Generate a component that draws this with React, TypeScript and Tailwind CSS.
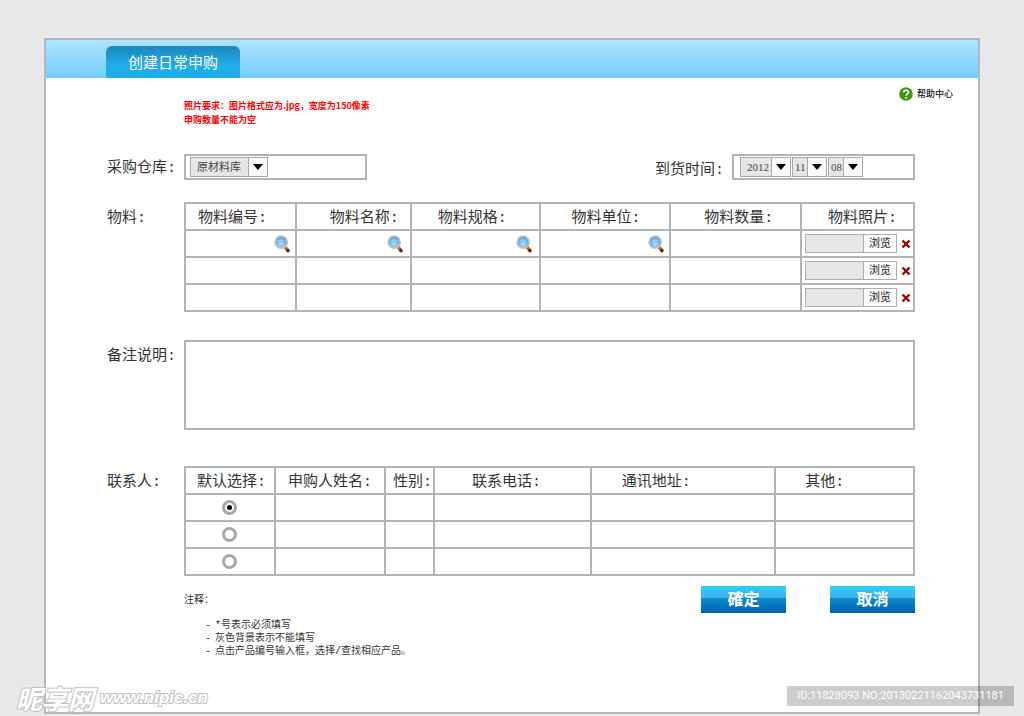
import React, { useState } from "react";

const LINE = "border-2 border-[#b0b5b6]";
const CJK = "font-['Liberation_Mono','Noto_Sans_CJK_SC',sans-serif]";
const HEAD = "p-0 pt-1 text-left leading-[21px] font-normal whitespace-nowrap";
const LABEL = "w-[77px] shrink-0 leading-[34px]";

const materialColumns = [
  { title: "物料编号", width: "w-[111px]", pad: "pl-[12px]", search: "pr-[5px]" },
  { title: "物料名称", width: "w-[115px]", pad: "pl-[33px]", search: "pr-[7px]" },
  { title: "物料规格", width: "w-[130px]", pad: "pl-[26px]", search: "pr-[7px]" },
  { title: "物料单位", width: "w-[130px]", pad: "pl-[30px]", search: "pr-[5px]" },
  { title: "物料数量", width: "w-[131px]", pad: "pl-[33px]", search: "" },
];

const contactColumns = [
  { title: "申购人姓名", width: "w-[110px]", pad: "pl-[12px]" },
  { title: "性别", width: "w-[49px]", pad: "pl-[7px]" },
  { title: "联系电话", width: "w-[157px]", pad: "pl-[37px]" },
  { title: "通讯地址", width: "w-[185px]", pad: "pl-[30px]" },
  { title: "其他", width: "w-[139px]", pad: "pl-[29px]" },
];

const notes = [
  "*号表示必须填写",
  "灰色背景表示不能填写",
  "点击产品编号输入框\uff0c选择/查找相应产品。",
];

const rows = [1, 2, 3];

function SearchIcon() {
  return (
    <svg viewBox="0 0 16 18" className="h-[18px] w-4" aria-hidden="true">
      <defs>
        <radialGradient id="lens" cx="0.5" cy="0.65" r="0.6">
          <stop offset="0" stopColor="#b4e0fb" />
          <stop offset="0.6" stopColor="#6db4e4" />
          <stop offset="1" stopColor="#5a9fd2" />
        </radialGradient>
      </defs>
      <path d="M10 11 L11.5 12.6" stroke="#8d8f92" strokeWidth="2" />
      <path d="M11.2 12.4 L13.6 15.2" stroke="#c9792a" strokeWidth="3.6" strokeLinecap="round" />
      <path d="M13.6 15.1 L14 15.8" stroke="#7a2408" strokeWidth="3.2" strokeLinecap="round" />
      <circle cx="7.2" cy="7.2" r="6" fill="url(#lens)" stroke="#bcc3c8" strokeWidth="1.8" />
      <path d="M3.6 6.4 C4.6 3.6 9.8 3.6 10.8 6.4 C9 5.6 5.4 5.6 3.6 6.4Z" fill="#fff" opacity="0.35" />
    </svg>
  );
}

function SmallSelect({ label, value, options, width, pad }: {
  label: string; value: string; options: string[]; width: string; pad: string;
}) {
  return (
    <span className={`relative block h-5 ${width}`}>
      <select
        aria-label={label}
        defaultValue={value}
        className={`block h-full w-full appearance-none border border-[#a5abab] bg-[#e6e6e6] font-['Liberation_Serif','Noto_Sans_CJK_SC',serif] text-[11px] leading-4 text-[#444] outline-none ${pad}`}
      >
        {options.map((o) => <option key={o}>{o}</option>)}
      </select>
      <span className="pointer-events-none absolute inset-y-0 right-0 flex w-5 items-center justify-center border border-[#a5abab] bg-[#f8f8f8]">
        <svg viewBox="0 0 10 6" className="h-[6px] w-[10px]" aria-hidden="true"><path d="M0 0H10L5 6Z" fill="#000" /></svg>
      </span>
    </span>
  );
}

function TextCell({ label }: { label: string }) {
  return <input type="text" aria-label={label} className="block h-[25px] w-full min-w-0 bg-transparent px-1 text-xs outline-none" />;
}

function ActionButton({ children }: { children: React.ReactNode }) {
  return (
    <button type="button" className="h-[27px] w-[85px] bg-[linear-gradient(to_bottom,#2ccbff_0%,#3fb2e2_45%,#0b8bd0_46%,#0060b0_100%)] pb-[2px] font-['Noto_Sans_CJK_TC',sans-serif] text-base leading-[25px] font-bold text-white">
      {children}
    </button>
  );
}

export default function App() {
  const [contact, setContact] = useState(1);
  return (
    <div className={`relative min-h-screen bg-[#e8e8e8] px-11 pt-[38px] pb-[2px] text-[15px] text-[#333] ${CJK}`}>
      <main className="min-h-[676px] border-2 border-[#b0b8b9] bg-white">
        <header className="flex h-[38px] items-end bg-linear-to-b from-[#aee4ff] to-[#72cdfd] pl-[60px]">
          <h1 className="flex h-8 w-[134px] items-center justify-center rounded-t-md bg-linear-to-b from-[#1c86bd] to-[#1fade8] to-60% pt-[6px] text-[15px] text-white">创建日常申购</h1>
        </header>

        <div className="flex items-start justify-between pr-[25px] pl-[138px] font-['Noto_Sans_CJK_SC',sans-serif] text-[9px] leading-[14px] font-bold">
          <p className="mt-[21px] text-[#f00]">
            {"照片要求\uff1a图片格式应为.jpg\uff0c宽度为150像素"}<br />申购数量不能为空
          </p>
          <a href="#help" className="mt-[9px] flex items-center gap-1 font-medium text-[#111]">
            <svg viewBox="0 0 14 14" className="size-[14px]" aria-hidden="true">
              <circle cx="7" cy="7" r="6.8" fill="#3c9a0c" />
              <path d="M4.6 5.4C4.7 2.6 9.6 2.6 9.5 5.4C9.4 7 7.2 6.9 7.1 8.7" fill="none" stroke="#fff" strokeWidth="1.5" />
              <circle cx="7.1" cy="10.9" r="1" fill="#fff" />
            </svg>
            <span>帮助中心</span>
          </a>
        </div>

        <form className="pr-[63px] pl-[61px]" onSubmit={(e) => e.preventDefault()}>
          <div className="mt-[27px] flex items-start justify-between">
            <div className="flex items-start">
              <span className="w-[77px] shrink-0 leading-[30px]">采购仓库:</span>
              <div className={`flex h-[26px] w-[183px] items-center pl-1 ${LINE}`}>
                <SmallSelect label="采购仓库" value="原材料库" options={["原材料库", "成品库"]} width="w-[78px]" pad="pl-[6px]" />
              </div>
            </div>
            <div className="flex items-start">
              <span className={LABEL}>到货时间:</span>
              <div className={`flex h-[26px] w-[183px] items-center gap-px pl-[6px] ${LINE}`}>
                <SmallSelect label="年" value="2012" options={["2011", "2012", "2013"]} width="w-[51px]" pad="pl-[6px]" />
                <SmallSelect label="月" value="11" options={["10", "11", "12"]} width="w-[35px]" pad="pl-[2px]" />
                <SmallSelect label="日" value="08" options={["07", "08", "09"]} width="w-[35px]" pad="pl-[2px]" />
              </div>
            </div>
          </div>

          <div className="mt-[14px] flex">
            <span className={LABEL}>物料:</span>
            <table className="min-w-0 flex-1 table-fixed border-collapse">
              <thead>
                <tr className="h-[27px]">
                  {materialColumns.map((c) => (
                    <th key={c.title} className={`${HEAD} ${LINE} ${c.width} ${c.pad}`}>{c.title}:</th>
                  ))}
                  <th className={`w-[113px] pl-[26px] ${HEAD} ${LINE}`}>物料照片:</th>
                </tr>
              </thead>
              <tbody>
                {rows.map((r) => (
                  <tr key={r} className="h-[27px]">
                    {materialColumns.map((c) => (
                      <td key={c.title} className={`p-0 ${LINE}`}>
                        <div className={`flex items-center ${c.search}`}>
                          <TextCell label={`${c.title} ${r}`} />
                          {r === 1 && c.search && (
                            <button type="button" aria-label={`查找${c.title}`} className="shrink-0"><SearchIcon /></button>
                          )}
                        </div>
                      </td>
                    ))}
                    <td className={`p-0 ${LINE}`}>
                      <div className="flex items-center pl-[3px]">
                        <input type="text" readOnly aria-label={`物料照片 ${r}`} className="h-[19px] w-[58px] border border-r-0 border-[#a9afb0] bg-[#e6e6e6] outline-none" />
                        <button type="button" className="h-[19px] w-[34px] border border-[#a9afb0] bg-[#fafafa] pt-[2px] text-[11px] leading-[15px] text-[#222]">浏览</button>
                        <button type="button" aria-label={`删除照片 ${r}`} className="ml-1">
                          <svg viewBox="0 0 10 10" className="size-[10px]" aria-hidden="true"><path d="M1.5 1.5L8.5 8.5M8.5 1.5L1.5 8.5" stroke="#9c0000" strokeWidth="2.4" /></svg>
                        </button>
                      </div>
                    </td>
                  </tr>
                ))}
              </tbody>
            </table>
          </div>

          <div className="mt-7 flex">
            <label htmlFor="remark" className={LABEL}>备注说明:</label>
            <textarea id="remark" className={`block h-[90px] min-w-0 flex-1 resize-none bg-white p-1 outline-none ${LINE}`} />
          </div>

          <div className="mt-9 flex">
            <span className={LABEL}>联系人:</span>
            <table className="min-w-0 flex-1 table-fixed border-collapse">
              <thead>
                <tr className="h-[27px]">
                  <th className={`w-[90px] pl-[11px] ${HEAD} ${LINE}`}>默认选择:</th>
                  {contactColumns.map((c) => (
                    <th key={c.title} className={`${HEAD} ${LINE} ${c.width} ${c.pad}`}>{c.title}:</th>
                  ))}
                </tr>
              </thead>
              <tbody>
                {rows.map((r) => (
                  <tr key={r} className="h-[27px]">
                    <td className={`p-0 ${LINE}`}>
                      <input
                        type="radio"
                        name="contact"
                        aria-label={`默认联系人 ${r}`}
                        checked={contact === r}
                        onChange={() => setContact(r)}
                        className="mx-auto flex size-[15px] appearance-none items-center justify-center rounded-full border-3 border-[#a3a9a9] bg-white before:size-[5px] before:rounded-full checked:before:bg-black"
                      />
                    </td>
                    {contactColumns.map((c) => (
                      <td key={c.title} className={`p-0 ${LINE}`}><TextCell label={`${c.title} ${r}`} /></td>
                    ))}
                  </tr>
                ))}
              </tbody>
            </table>
          </div>

          <div className="mt-[10px] flex items-start justify-between pl-[77px]">
            <section className="text-[10px] leading-[13px]">
              <h2 className="mt-2">{"注释\uff1a"}</h2>
              <ul className="mt-3 pl-[21px]">
                {notes.map((t) => (
                  <li key={t} className="flex gap-1"><span>-</span>{t}</li>
                ))}
              </ul>
            </section>
            <div className="flex gap-11">
              <ActionButton>確定</ActionButton>
              <ActionButton>取消</ActionButton>
            </div>
          </div>
        </form>
      </main>

      <div className="pointer-events-none absolute bottom-1 left-4 flex items-center gap-[6px] font-bold text-white italic [paint-order:stroke_fill] [-webkit-text-stroke:2px_#c2c2c2]">
        <span className="font-['Noto_Sans_CJK_SC',sans-serif] text-[26px] leading-7">昵享网</span>
        <span className="font-['Liberation_Sans',sans-serif] text-[17px] leading-7">www.nipic.cn</span>
      </div>
      <div className="pointer-events-none absolute right-[10px] bottom-[10px] h-5 bg-black/20 px-[10px] font-['Roboto',sans-serif] text-[11px] leading-5 text-white">
        ID:11828093 NO:20130221162043731181
      </div>
    </div>
  );
}
